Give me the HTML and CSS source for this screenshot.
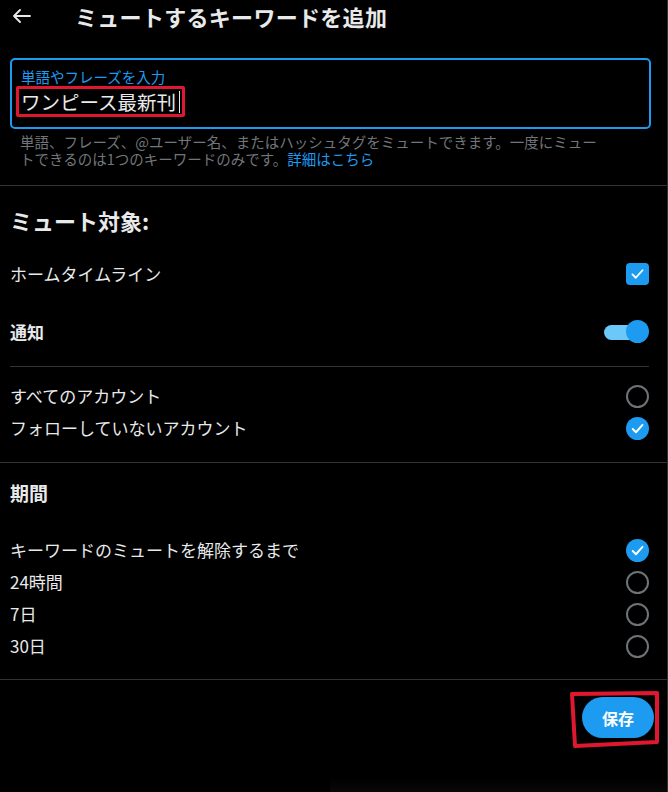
FILE: index.html
```html
<!DOCTYPE html>
<html lang="ja">
<head>
<meta charset="utf-8">
<title>ミュートするキーワードを追加</title>
<link rel="stylesheet" href="styles.css">
</head>
<body>
<div class="page">
  <header class="header">
    <svg class="back" viewBox="0 0 18 14" width="18" height="14"><path d="M1 7H17M7 1L1 7L7 13" fill="none" stroke="#e7e9ea" stroke-width="1.8" stroke-linecap="round" stroke-linejoin="round"/></svg>
    <h1 class="title">ミュートするキーワードを追加</h1>
  </header>

  <div class="field">
    <div class="field-label">単語やフレーズを入力</div>
    <div class="field-value"><span class="value-text">ワンピース最新刊</span><span class="caret"></span><span class="mark-input"></span></div>
  </div>
  <p class="help"><span class="help-line">単語、フレーズ、@ユーザー名、またはハッシュタグをミュートできます。一度にミュー</span><span class="help-line">トできるのは1つのキーワードのみです。<span class="link">詳細はこちら</span></span></p>

  <hr class="divider d1">

  <h2 class="section-title st1">ミュート対象:</h2>
  <div class="row r-home">
    <span class="row-label">ホームタイムライン</span>
    <span class="checkbox"><svg viewBox="0 0 24 24" width="23" height="22"><path d="M6.5 12.5l3.6 3.6 7.4-8.2" fill="none" stroke="#fff" stroke-width="2" stroke-linecap="round" stroke-linejoin="round"/></svg></span>
  </div>
  <div class="row r-notify">
    <span class="row-label bold">通知</span>
    <span class="toggle"><span class="knob"></span></span>
  </div>
  <hr class="divider inset d2">
  <div class="row r-all">
    <span class="row-label">すべてのアカウント</span>
    <span class="radio"></span>
  </div>
  <div class="row">
    <span class="row-label">フォローしていないアカウント</span>
    <span class="radio checked"><svg viewBox="0 0 24 24" width="23" height="23"><path d="M7 12.5l3.4 3.4 6.8-7.6" fill="none" stroke="#fff" stroke-width="2" stroke-linecap="round" stroke-linejoin="round"/></svg></span>
  </div>

  <hr class="divider d3">

  <h2 class="section-title st2">期間</h2>
  <div class="row r-until">
    <span class="row-label">キーワードのミュートを解除するまで</span>
    <span class="radio checked"><svg viewBox="0 0 24 24" width="23" height="23"><path d="M7 12.5l3.4 3.4 6.8-7.6" fill="none" stroke="#fff" stroke-width="2" stroke-linecap="round" stroke-linejoin="round"/></svg></span>
  </div>
  <div class="row">
    <span class="row-label">24時間</span>
    <span class="radio"></span>
  </div>
  <div class="row">
    <span class="row-label">7日</span>
    <span class="radio"></span>
  </div>
  <div class="row">
    <span class="row-label">30日</span>
    <span class="radio"></span>
  </div>

  <hr class="divider d4">

  <div class="footer">
    <div class="save-wrap">
      <button class="save">保存</button>
      <svg class="mark-save" viewBox="0 0 92 58" width="92" height="58"><polygon points="3,3 88,2 88,51 6,55" fill="none" stroke="#e0182f" stroke-width="4" stroke-linejoin="round"/></svg>
    </div>
  </div>
  <div class="bottom-fade"></div>
</div>
</body>
</html>
```

FILE: styles.css
```css
html, body {
  margin: 0;
  padding: 0;
  background: #000;
}

body {
  font-family: "Noto Sans CJK JP", "Noto Sans", sans-serif;
  color: #e7e9ea;
}

.page {
  position: relative;
  width: 668px;
  height: 792px;
  box-sizing: border-box;
  border-right: 1px solid #2f3336;
  overflow: hidden;
}

.header {
  display: flex;
  align-items: center;
  height: 32px;
  padding-left: 13px;
}

.back {
  display: block;
  margin-right: 44px;
}

.title {
  margin: 0;
  font-size: 22px;
  font-weight: 700;
  line-height: 32px;
  letter-spacing: 0.3px;
}

.field {
  margin: 26px 16px 0 10px;
  height: 71px;
  box-sizing: border-box;
  border: 2px solid #1d9bf0;
  border-radius: 5px;
  padding: 8px 9px 0 9px;
}

.field-label {
  font-size: 14.5px;
  line-height: 18px;
  color: #1d9bf0;
}

.field-value {
  position: relative;
  display: inline-flex;
  align-items: center;
  margin-top: 3px;
  height: 26px;
  font-size: 19.5px;
  line-height: 26px;
}

.caret {
  width: 1px;
  height: 22px;
  background: #e7e9ea;
  margin-left: 3px;
}

.mark-input {
  position: absolute;
  left: -5px;
  right: -5px;
  top: -3px;
  bottom: -2px;
  border: 3px solid #e0182f;
  border-radius: 2px;
}

.help {
  display: flex;
  flex-direction: column;
  margin: 4px 20px 0 20px;
  font-size: 14.5px;
  color: #71767b;
}

.help-line {
  display: block;
  height: 17px;
  line-height: 17px;
  white-space: nowrap;
}

.link {
  color: #1d9bf0;
}

.divider {
  border: 0;
  height: 1px;
  background: #2f3336;
  margin: 0;
}

.divider.inset {
  margin-left: 10px;
  margin-right: 18px;
}

.d1 { margin-top: 18px; }
.d2 { margin-top: 18px; }
.d3 { margin-top: 18px; }
.d4 { margin-top: 17px; }

.section-title {
  margin: 0 10px;
  height: 32px;
  font-weight: 700;
  line-height: 32px;
}

.st1 { margin-top: 18px; font-size: 22px; }
.st2 { margin-top: 14px; font-size: 19px; }

.row {
  display: flex;
  align-items: center;
  justify-content: space-between;
  height: 32px;
  padding: 0 18px 0 10px;
}

.row-label {
  font-size: 17px;
  line-height: 24px;
}

.row-label.bold {
  font-weight: 700;
}

.r-home { margin-top: 22px; }
.r-notify { margin-top: 26px; }
.r-all { margin-top: 13px; }
.r-until { margin-top: 25px; }

.checkbox {
  display: flex;
  width: 23px;
  height: 22px;
  border-radius: 4px;
  background: #1d9bf0;
}

.toggle {
  position: relative;
  display: block;
  width: 45px;
  height: 24px;
}

.toggle::before {
  content: "";
  position: absolute;
  left: 0;
  top: 5px;
  width: 38px;
  height: 15px;
  border-radius: 8px;
  background: #6cc8fa;
}

.knob {
  position: absolute;
  right: 0;
  top: 0;
  width: 23px;
  height: 23px;
  border-radius: 50%;
  background: #1d9bf0;
}

.radio {
  display: flex;
  width: 23px;
  height: 23px;
  box-sizing: border-box;
  border: 2px solid #6e7377;
  border-radius: 50%;
}

.radio.checked {
  border: 0;
  background: #1d9bf0;
}

.footer {
  display: flex;
  justify-content: flex-end;
  padding: 17px 13px 0 0;
}

.save-wrap {
  position: relative;
}

.save {
  display: block;
  width: 72px;
  height: 41px;
  border: 0;
  border-radius: 21px;
  background: #1d9bf0;
  color: #fff;
  font-family: "Noto Sans CJK JP", "Noto Sans", sans-serif;
  font-size: 16px;
  font-weight: 700;
  padding: 0;
}

.mark-save {
  position: absolute;
  left: -13px;
  top: -6px;
}

.bottom-fade {
  position: absolute;
  left: 330px;
  right: 0;
  bottom: 0;
  height: 14px;
  background: linear-gradient(to bottom, rgba(24, 24, 24, 0), rgba(24, 24, 24, 0.35));
}
```
